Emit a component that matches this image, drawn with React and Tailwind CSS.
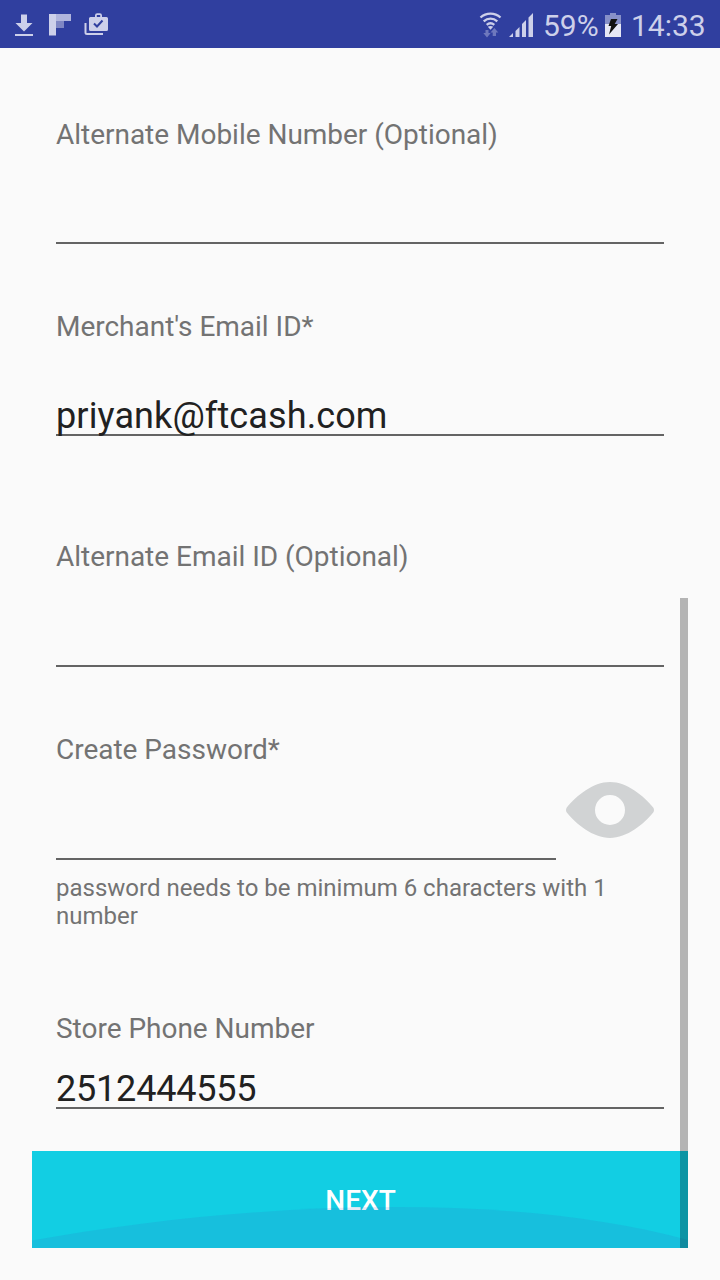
function StatusBar() {
  return (
    <header className="flex h-12 shrink-0 items-center bg-[#303f9f] pr-[9px] text-[#cdd0ea]">
      <svg width="130" height="48" viewBox="0 0 130 48" fill="#cdd0ea">
        <path d="M21 14.500h6V23h5.500L24 31.500 15.500 23H21zM15 34h18v2H15z" />
        <path d="M49 14h7v21.500h-7z" />
        <path d="M56 14h15v7H56z" opacity=".82" />
        <path d="M56 21h8v7h-8z" opacity=".5" />
        <path d="M84.500 23v9.500a2.500 2.500 0 0 0 2.500 2.500h16v-2H86.500V23z" />
        <path
          fillRule="evenodd"
          d="M95 17v-1.500a2.200 2.200 0 0 1 2.200-2.200h2.600a2.200 2.200 0 0 1 2.200 2.200V17h4.500a1.500 1.500 0 0 1 1.500 1.500v11a1.500 1.500 0 0 1-1.500 1.500h-16a1.500 1.500 0 0 1-1.500-1.500v-11a1.500 1.500 0 0 1 1.500-1.500zm1.800 0h3.400v-2h-3.400z"
        />
        <path d="M94 23.500l3 3 5.500-6" fill="none" stroke="#303f9f" strokeWidth="2" />
      </svg>
      <svg className="ml-auto" width="64" height="48" viewBox="478 0 64 48" fill="#cdd0ea">
        <g fill="none" stroke="#cdd0ea" strokeWidth="2.300">
          <path d="M480.500 17.500c5.700-5.200 14.300-5.200 20 0" />
          <path d="M483.700 21.300c4-3.600 9.600-3.600 13.600 0" />
          <path d="M486.700 24.800c2.400-2 5.200-2 7.600 0" />
        </g>
        <path d="M487.800 26.700q2.700-1.500 5.400 0l-2.700 3z" />
        <path
          opacity=".4"
          d="M485.500 30h3v3h2.200l-3.700 4.500-3.700-4.500h2.200zM492.700 36v-3.500h-2.200l3.900-4.500 3.900 4.500H496V36z"
        />
        <path d="M509 37l4-4v4zM515.500 31l4-4v10h-4zM522 24l4-4v17h-4zM528.500 17.500l4.500-4.500v24h-4.500z" />
      </svg>
      <span className="w-[62px] pl-px pt-[3px] text-[30px] leading-9">59%</span>
      <svg width="18" height="48" viewBox="604 0 18 48">
        <path d="M610 13h6v2h5v9h-16v-9h5z" fill="#8790c8" />
        <path d="M605 24h16v13h-16z" fill="#e6e7f5" />
        <path d="M611 19h6.500l-2.800 5h3.300l-9 10.500 2.200-8.500h-2.700z" fill="#111" />
      </svg>
      <span className="w-[89px] pl-[9px] pt-[3px] text-[30px] leading-9">14:33</span>
    </header>
  );
}

function Field({ label, value, className, gap, tracking = "" }) {
  return (
    <label className={`block ${className}`}>
      <span className="block pt-px text-[28px] leading-8 tracking-[-0.02px] text-[#737373]">{label}</span>
      <span
        className={`block h-[42px] border-b-2 border-[#646464] text-[36px] leading-[42px] text-[#212121] ${gap} ${tracking}`}
      >
        {value}
      </span>
    </label>
  );
}

function EyeIcon() {
  return (
    <svg className="mb-[22px] mr-2.5" width="88" height="56" viewBox="0 0 88 56">
      <path
        fill="#d1d3d4"
        fillRule="evenodd"
        d="M0.600 25.700C10 14 27 0 44 0s34 14 43.400 25.700q1.200 2.300 0 4.600C78 42 61 56 44 56S10 42 .600 30.300q-1.200-2.300 0-4.600zM44 13a15 15 0 1 0 0 30 15 15 0 0 0 0-30z"
      />
    </svg>
  );
}

export default function App() {
  return (
    <div className="flex h-[1280px] w-[720px] flex-col overflow-hidden bg-[#fafafa] font-['Roboto',sans-serif]">
      <StatusBar />
      <main className="relative mx-8 h-[1200px]">
        <form className="flex flex-col">
          <div className="flex h-[1103px] flex-col px-6 pt-[70px]">
            <Field label="Alternate Mobile Number (Optional)" className="h-[126px]" gap="mt-[51px]" />
            <Field
              label="Merchant's Email ID*"
              value="priyank@ftcash.com"
              className="mt-[66px] h-[126px]"
              gap="mt-[51px] pt-px"
              tracking="tracking-[0.11px]"
            />
            <Field
              label="Alternate Email ID (Optional)"
              className="mt-[104px] h-[127px]"
              gap="mt-[52px]"
            />
            <div className="mt-[66px] flex h-[127px] items-end justify-between">
              <Field label="Create Password*" className="h-[127px] w-[500px]" gap="mt-[52px]" />
              <EyeIcon />
            </div>
            <p className="mt-[14px] w-[590px] text-[24px] leading-7 text-[#737373]">
              password needs to be minimum 6 characters with 1 number
            </p>
            <Field
              label="Store Phone Number"
              value="2512444555"
              className="mt-[82px] h-[97px]"
              gap="mt-[22px] pt-px"
              tracking="tracking-[-0.2px]"
            />
          </div>
          <button
            type="button"
            className="relative flex h-[97px] w-full items-center justify-center bg-[#12cee3] text-[28px] font-medium leading-8 text-white"
          >
            <span className="pl-px pt-0.5">NEXT</span>
            <svg className="absolute inset-0" width="656" height="97" viewBox="0 0 656 97">
              <path
                d="M0 89.500C120 68 245 56 365 56c110 0 210 11 291 33v8H0z"
                fill="#3f51b5"
                opacity=".12"
              />
            </svg>
          </button>
        </form>
        <div className="absolute right-0 top-[550px] h-[650px] w-2 bg-black/28" />
      </main>
    </div>
  );
}
